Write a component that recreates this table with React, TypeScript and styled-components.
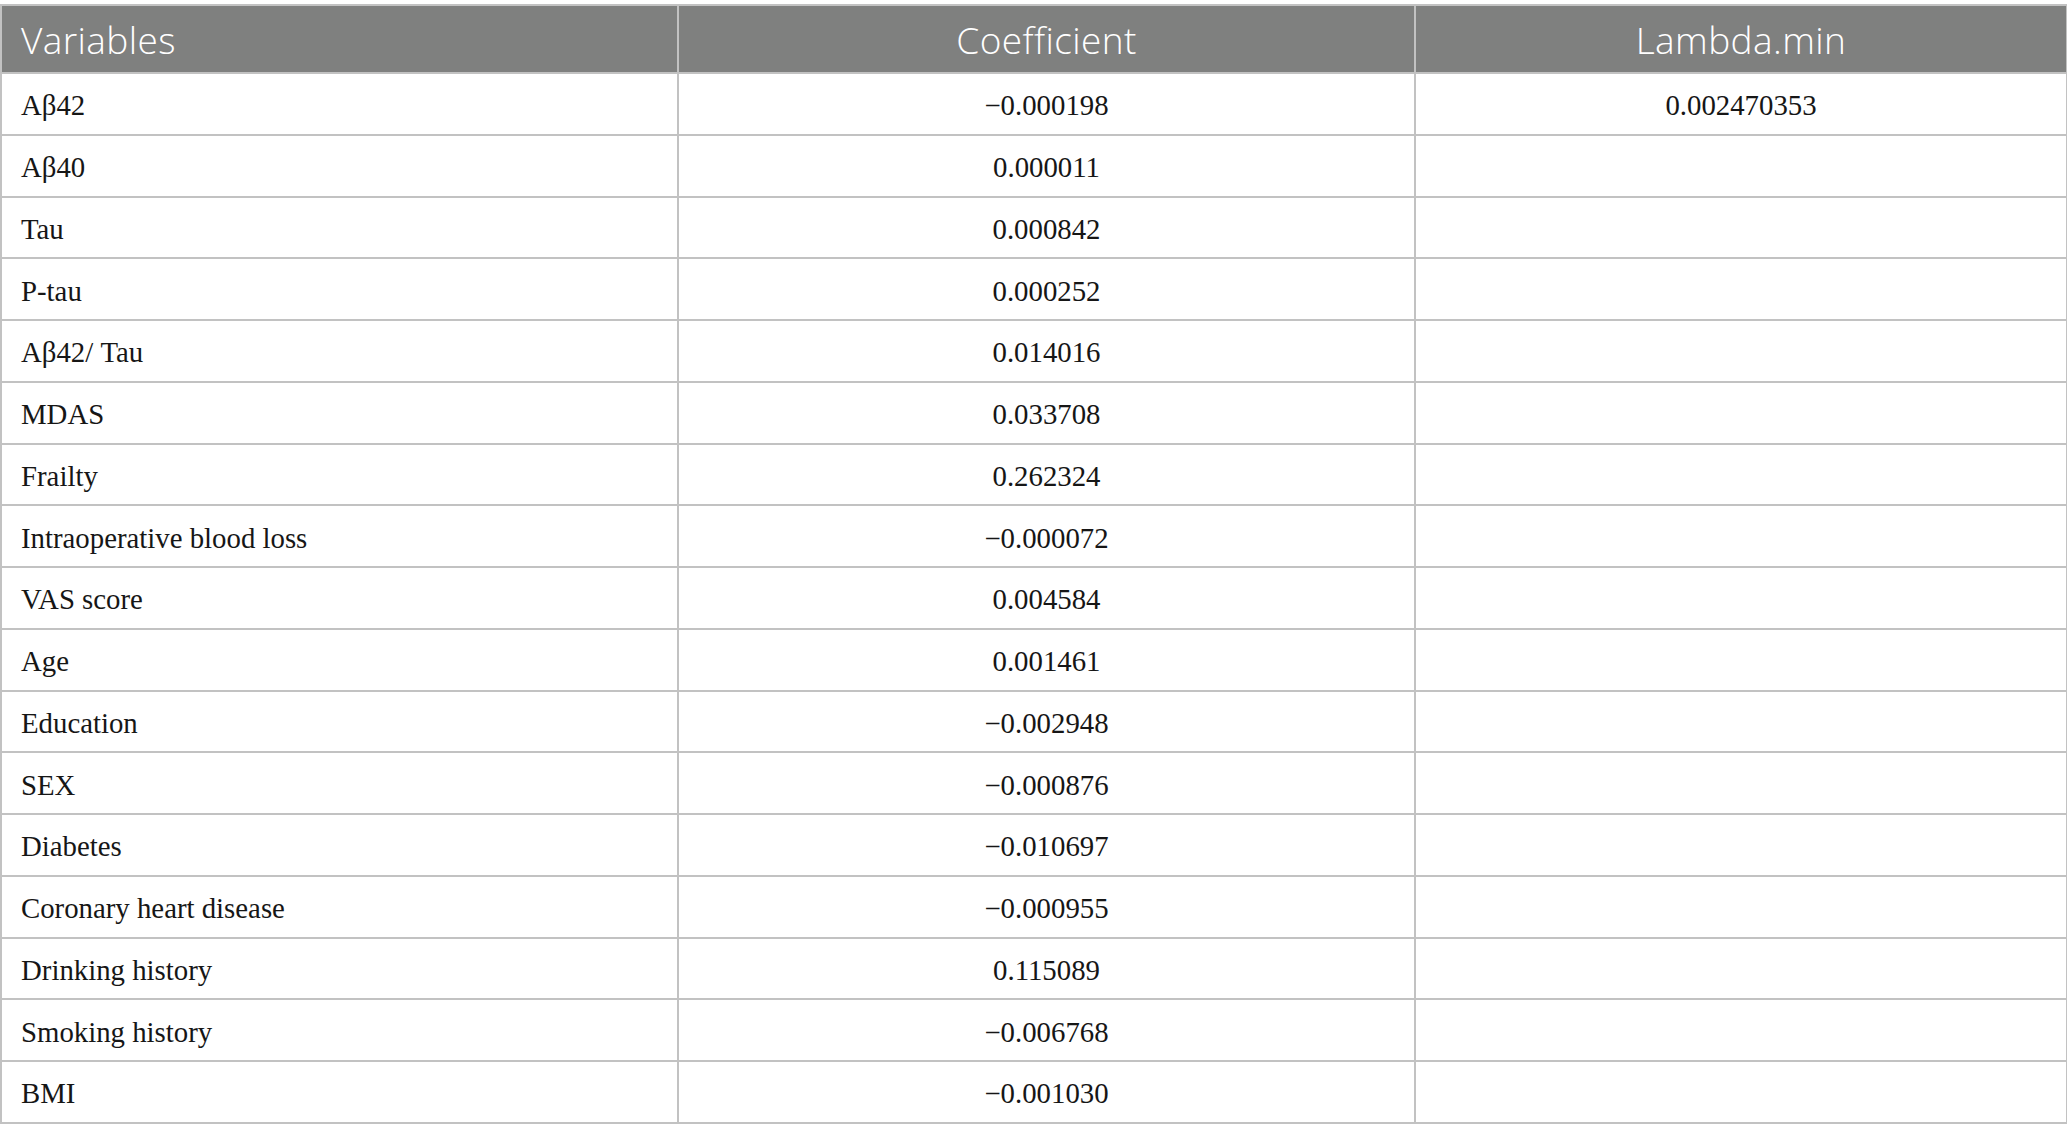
import React from "react";
import styled, { createGlobalStyle } from "styled-components";

const Global = createGlobalStyle`
  html, body { margin: 0; padding: 0; background: #ffffff; }
  #root { width: 2067px; height: 1141px; }
`;

const Page = styled.div`
  padding-top: 4px;
  width: 2067px;
  height: 1141px;
  box-sizing: border-box;
  background: #ffffff;
`;

const Table = styled.table`
  width: 2066px;
  border-collapse: collapse;
  table-layout: fixed;
  border: 2px solid #c2c2c2;
`;

const HeadRow = styled.tr`
  height: 68px;
  background: #7f807f;
`;

const HeadCell = styled.th<{ $align?: string }>`
  font-family: "Open Sans", "Noto Sans", sans-serif;
  font-weight: 350;
  font-size: 37px;
  letter-spacing: 0.4px;
  font-variant-ligatures: none;
  color: #ffffff;
  text-align: ${(p) => p.$align || "center"};
  padding: 0 19px;
  border: 2px solid #c2c2c2;
  vertical-align: middle;
`;

const BodyRow = styled.tr`
  height: 61.76px;
`;

const Cell = styled.td<{ $align?: string }>`
  font-family: "Liberation Serif", "Times New Roman", serif;
  font-size: 28.8px;
  color: #161616;
  text-align: ${(p) => p.$align || "center"};
  padding: 4px 19px 0 19px;
  border: 2px solid #c2c2c2;
  vertical-align: middle;
`;

const rows: [string, string, string][] = [
  ["Aβ42", "−0.000198", "0.002470353"],
  ["Aβ40", "0.000011", ""],
  ["Tau", "0.000842", ""],
  ["P-tau", "0.000252", ""],
  ["Aβ42/ Tau", "0.014016", ""],
  ["MDAS", "0.033708", ""],
  ["Frailty", "0.262324", ""],
  ["Intraoperative blood loss", "−0.000072", ""],
  ["VAS score", "0.004584", ""],
  ["Age", "0.001461", ""],
  ["Education", "−0.002948", ""],
  ["SEX", "−0.000876", ""],
  ["Diabetes", "−0.010697", ""],
  ["Coronary heart disease", "−0.000955", ""],
  ["Drinking history", "0.115089", ""],
  ["Smoking history", "−0.006768", ""],
  ["BMI", "−0.001030", ""],
];

export default function App() {
  return (
    <Page>
      <Global />
      <Table>
        <colgroup>
          <col style={{ width: 677 }} />
          <col style={{ width: 737 }} />
          <col style={{ width: 652 }} />
        </colgroup>
        <thead>
          <HeadRow>
            <HeadCell $align="left">Variables</HeadCell>
            <HeadCell>Coefficient</HeadCell>
            <HeadCell>Lambda.min</HeadCell>
          </HeadRow>
        </thead>
        <tbody>
          {rows.map((r, i) => (
            <BodyRow key={i}>
              <Cell $align="left">{r[0]}</Cell>
              <Cell>{r[1]}</Cell>
              <Cell>{r[2]}</Cell>
            </BodyRow>
          ))}
        </tbody>
      </Table>
    </Page>
  );
}
